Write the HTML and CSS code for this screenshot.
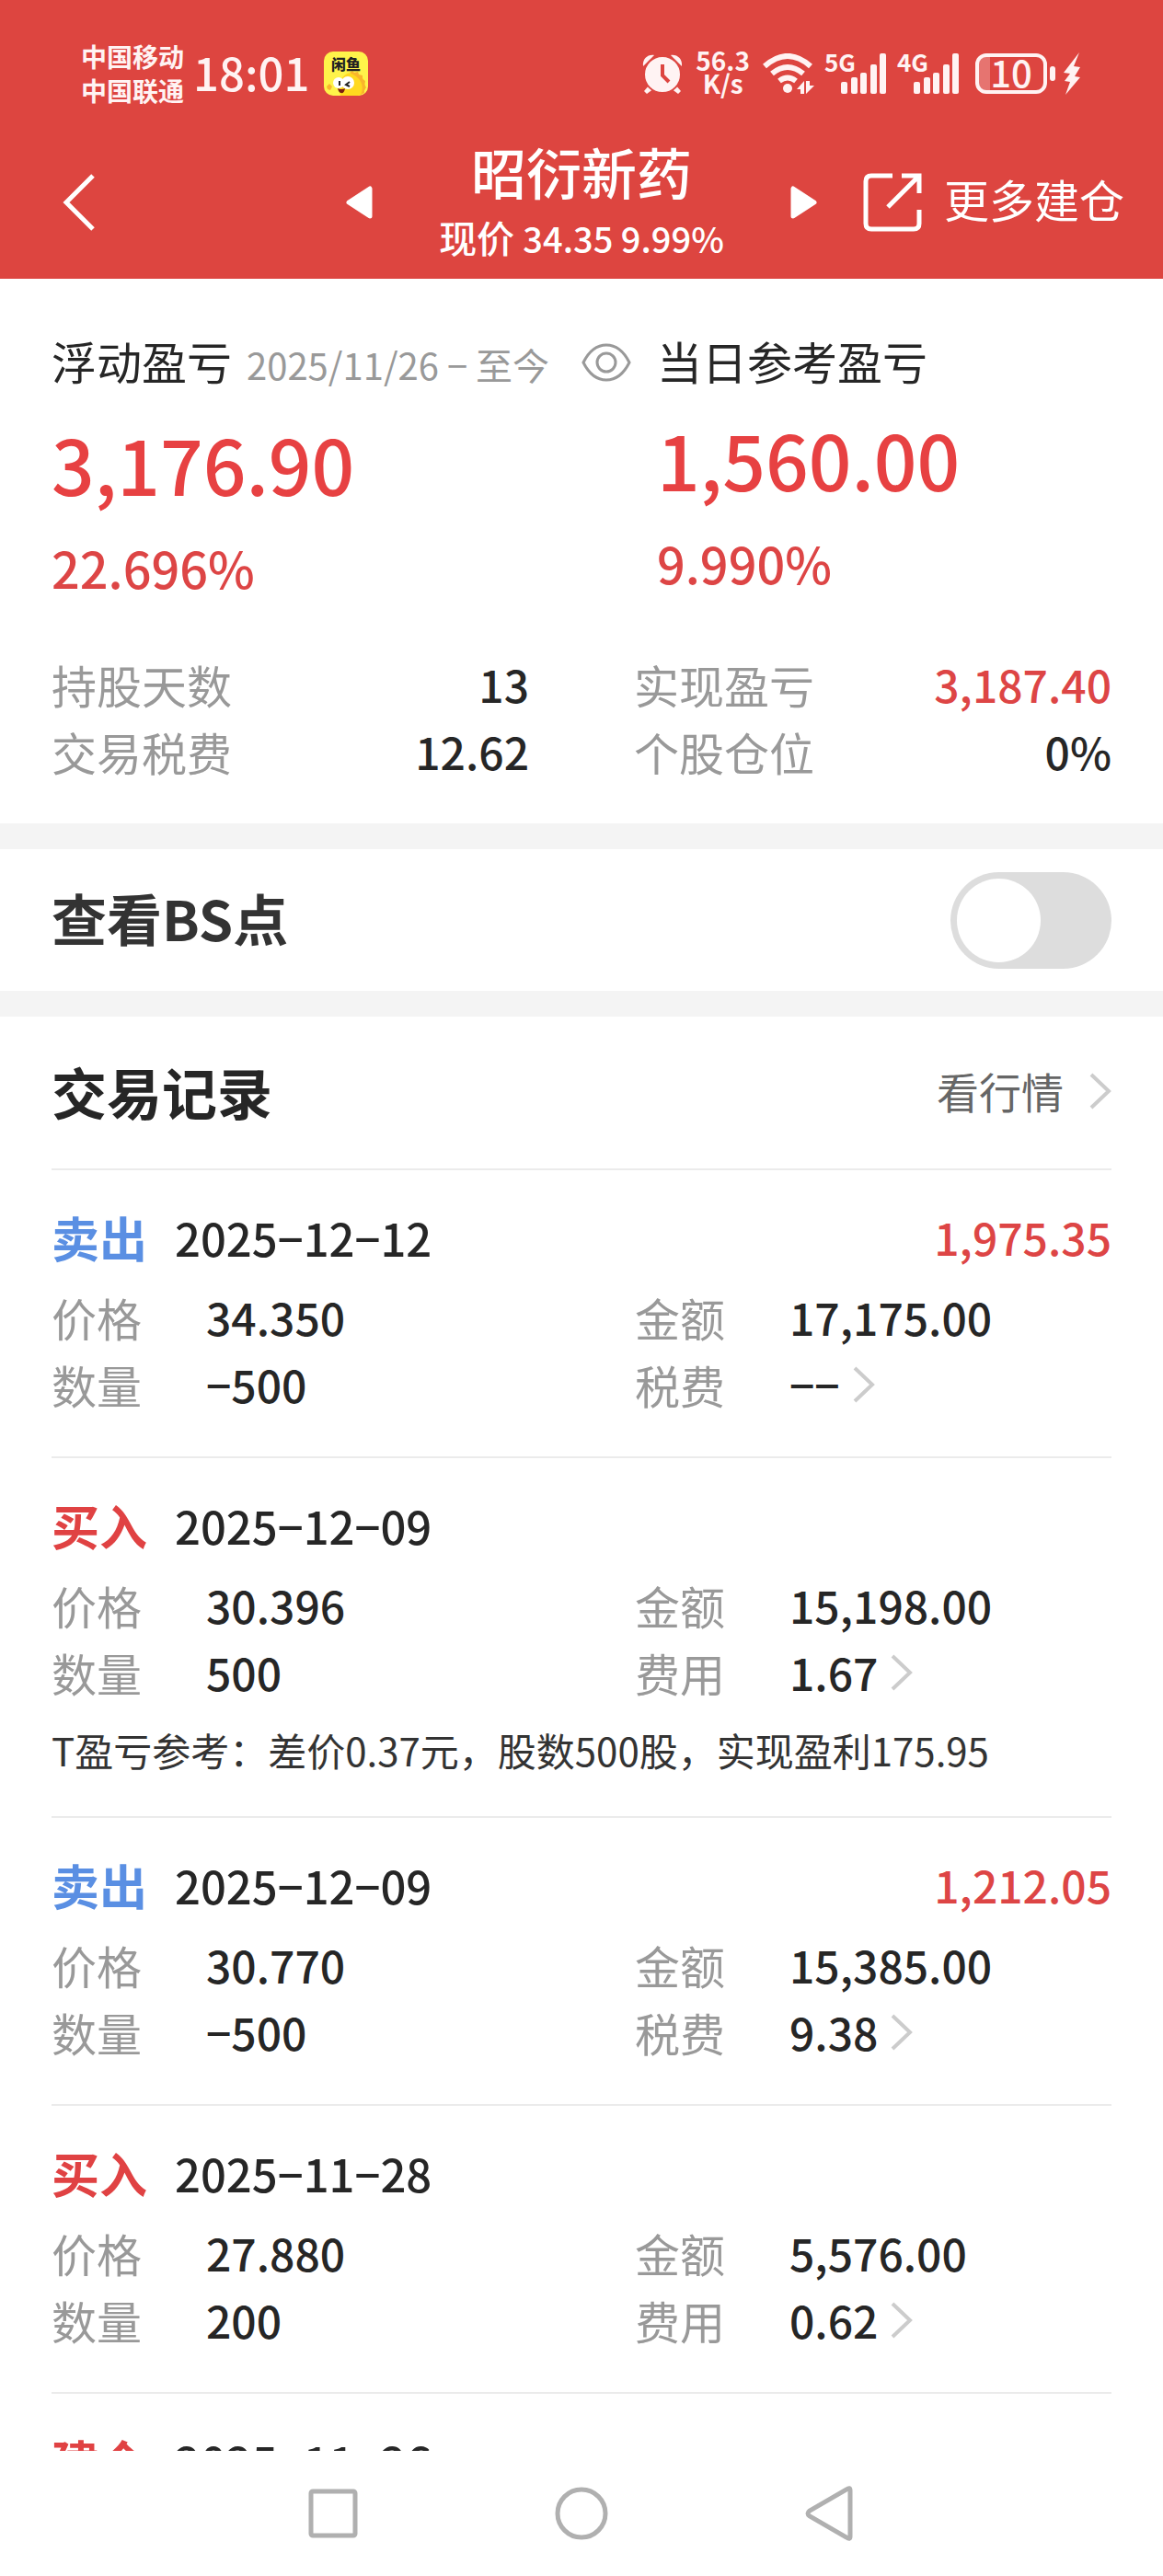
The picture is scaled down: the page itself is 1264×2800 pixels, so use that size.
FILE: index.html
```
<!DOCTYPE html>
<html lang="zh-CN">
<head>
    <meta charset="UTF-8">
    <meta name="viewport" content="width=device-width, initial-scale=1.0">
    <title>昭衍新药</title>
    <link rel="stylesheet" href="styles.css">
</head>
<body>
    <header class="header">
        <!-- Phone status bar -->
        <div class="status-bar">
            <div class="carriers">中国移动<br>中国联通</div>
            <div class="clock">18:01</div>
            <svg class="app-icon" viewBox="0 0 48 48">
                <rect width="48" height="48" rx="10" fill="#fff34a"/>
                <path d="M18 48C14 34 20 23 31 23c9 0 15 8 14 17-1 4-4 7-8 8z" fill="#ffd91f"/>
                <path d="M28 23l3-2 2 2 4-1 1 3 4 1 0 4 3 2-1 4 2 3-2 3 0 3-4 2c4-8 2-18-12-24z" fill="#f9b52c"/>
                <path d="M3 38l3-3 3 3-2 4-3-1z" fill="#f9b52c"/>
                <circle cx="16" cy="34" r="6" fill="#fff"/>
                <circle cx="26" cy="34" r="7" fill="#fff"/>
                <path d="M17 32v5M28 33l-4 3 4 2" fill="none" stroke="#222" stroke-width="2"/>
                <path d="M15 40q4 2 8 0-1 6-4 5-3 0-4-5z" fill="#7a1f10"/>
                <text x="24" y="20" text-anchor="middle" class="app-icon-text">闲鱼</text>
            </svg>
            <div class="status-icons">
                <svg class="icon-alarm" viewBox="0 0 44 44" fill="currentColor">
                    <path d="M1 14C0 6 6 1 13 2zM43 14C44 6 38 1 31 2z"/>
                    <path d="M8 34l-6 7 3 3 8-6zM36 34l6 7-3 3-8-6z"/>
                    <circle cx="22" cy="23" r="20" stroke="#dd4540" stroke-width="2"/>
                    <path d="M22 12v12l7 7" fill="none" stroke="#dd4540" stroke-width="4"/>
                </svg>
                <div class="speed">56.3<br>K/s</div>
                <svg class="icon-wifi" viewBox="0 0 56 44">
                    <g fill="none" stroke="currentColor" stroke-width="6">
                        <path d="M2 14q25-22 50 0"/>
                        <path d="M10 22q17-14 34 0"/>
                        <path d="M18 30q9-7 18 0"/>
                    </g>
                    <circle cx="27" cy="38" r="5" fill="currentColor"/>
                    <path d="M45 44V30l-8 9h4v5zM47 30v14l9-9h-5v-5z" fill="currentColor"/>
                </svg>
                <div class="signal">
                    <span class="signal-type">5G</span>
                    <svg viewBox="0 0 66 44" fill="currentColor">
                        <rect x="16" y="31" width="7" height="13" rx="2"/>
                        <rect x="27" y="26" width="7" height="18" rx="2"/>
                        <rect x="37" y="21" width="7" height="23" rx="2"/>
                        <rect x="48" y="12" width="7" height="32" rx="2"/>
                        <rect x="58" y="0" width="7" height="44" rx="2"/>
                    </svg>
                </div>
                <div class="signal">
                    <span class="signal-type">4G</span>
                    <svg viewBox="0 0 66 44" fill="currentColor">
                        <rect x="16" y="31" width="7" height="13" rx="2"/>
                        <rect x="27" y="26" width="7" height="18" rx="2"/>
                        <rect x="37" y="21" width="7" height="23" rx="2"/>
                        <rect x="48" y="12" width="7" height="32" rx="2"/>
                        <rect x="58" y="0" width="7" height="44" rx="2"/>
                    </svg>
                </div>
                <div class="battery">10</div>
                <svg class="icon-bolt" viewBox="0 0 18 46" fill="currentColor">
                    <path d="M17 0L0 22l7 1-6 8 6 1-5 14L18 27l-6-1 6-10-7-1z"/>
                </svg>
            </div>
        </div>

        <!-- Title bar -->
        <nav class="title-bar">
            <button class="icon-button back" aria-label="返回">
                <svg width="36" height="62" viewBox="0 0 36 62"><path d="M33 2L4 31l29 29" fill="none" stroke="currentColor" stroke-width="5"/></svg>
            </button>
            <div class="stock">
                <button class="icon-button" aria-label="上一只">
                    <svg width="30" height="36" viewBox="0 0 30 36"><path d="M3 18L26 3v30z" fill="currentColor" stroke="currentColor" stroke-width="5" stroke-linejoin="round"/></svg>
                </button>
                <div class="stock-title">
                    <h1>昭衍新药</h1>
                    <p>现价 <span>34.35 9.99%</span></p>
                </div>
                <button class="icon-button" aria-label="下一只">
                    <svg width="30" height="36" viewBox="0 0 30 36"><path d="M27 18L4 3v30z" fill="currentColor" stroke="currentColor" stroke-width="5" stroke-linejoin="round"/></svg>
                </button>
            </div>
            <a class="more" href="#">
                <svg width="64" height="64" viewBox="0 0 64 64" fill="none" stroke="currentColor" stroke-width="5">
                    <path d="M32 3H9q-6 0-6 6v46q0 6 6 6h46q6 0 6-6V40"/>
                    <path d="M42 3h19v19M60 4L27 37"/>
                </svg>
                <span>更多建仓</span>
            </a>
        </nav>
    </header>

    <main class="content">
        <section class="summary">
            <div class="profit">
                <div class="profit-item">
                    <div class="profit-label">浮动盈亏 <small>2025/11/26 − 至今</small>
                        <button class="icon-button eye" aria-label="隐藏金额">
                            <svg width="54" height="42" viewBox="0 0 54 42" fill="none" stroke="currentColor" stroke-width="3">
                                <path d="M2 21C8 9 16 2 27 2s19 7 25 19c-6 12-14 19-25 19S8 33 2 21z"/>
                                <circle cx="27" cy="21" r="10"/>
                            </svg>
                        </button>
                    </div>
                    <div class="profit-value">3,176.90</div>
                    <div class="profit-rate">22.696%</div>
                </div>
                <div class="profit-item">
                    <div class="profit-label">当日参考盈亏</div>
                    <div class="profit-value">1,560.00</div>
                    <div class="profit-rate">9.990%</div>
                </div>
            </div>
            <dl class="stats">
                <div><dt>持股天数</dt><dd>13</dd></div>
                <div><dt>实现盈亏</dt><dd class="red">3,187.40</dd></div>
                <div><dt>交易税费</dt><dd>12.62</dd></div>
                <div><dt>个股仓位</dt><dd>0%</dd></div>
            </dl>
        </section>

        <section class="bs-row">
            <label for="bsSwitch">查看BS点</label>
            <input type="checkbox" id="bsSwitch" class="switch">
        </section>

        <section class="records">
            <div class="records-head">
                <h2>交易记录</h2>
                <a href="#">看行情 <svg class="arrow" viewBox="0 0 24 40"><path d="M2 2l19 18L2 38"/></svg></a>
            </div>

            <article class="record">
                <div class="record-head"><b class="sell">卖出</b><time>2025−12−12</time><span class="red">1,975.35</span></div>
                <dl class="record-data">
                    <dt>价格</dt><dd>34.350</dd>
                    <dt>金额</dt><dd>17,175.00</dd>
                    <dt>数量</dt><dd>−500</dd>
                    <dt>税费</dt><dd>−− <svg class="arrow" viewBox="0 0 24 40"><path d="M2 2l19 18L2 38"/></svg></dd>
                </dl>
            </article>

            <article class="record">
                <div class="record-head"><b class="buy">买入</b><time>2025−12−09</time></div>
                <dl class="record-data">
                    <dt>价格</dt><dd>30.396</dd>
                    <dt>金额</dt><dd>15,198.00</dd>
                    <dt>数量</dt><dd>500</dd>
                    <dt>费用</dt><dd>1.67 <svg class="arrow" viewBox="0 0 24 40"><path d="M2 2l19 18L2 38"/></svg></dd>
                </dl>
                <p class="record-note">T盈亏参考：差价0.37元，股数500股，实现盈利175.95</p>
            </article>

            <article class="record">
                <div class="record-head"><b class="sell">卖出</b><time>2025−12−09</time><span class="red">1,212.05</span></div>
                <dl class="record-data">
                    <dt>价格</dt><dd>30.770</dd>
                    <dt>金额</dt><dd>15,385.00</dd>
                    <dt>数量</dt><dd>−500</dd>
                    <dt>税费</dt><dd>9.38 <svg class="arrow" viewBox="0 0 24 40"><path d="M2 2l19 18L2 38"/></svg></dd>
                </dl>
            </article>

            <article class="record">
                <div class="record-head"><b class="buy">买入</b><time>2025−11−28</time></div>
                <dl class="record-data">
                    <dt>价格</dt><dd>27.880</dd>
                    <dt>金额</dt><dd>5,576.00</dd>
                    <dt>数量</dt><dd>200</dd>
                    <dt>费用</dt><dd>0.62 <svg class="arrow" viewBox="0 0 24 40"><path d="M2 2l19 18L2 38"/></svg></dd>
                </dl>
            </article>

            <article class="record">
                <div class="record-head"><b class="buy">建仓</b><time>2025−11−26</time></div>
            </article>
        </section>
    </main>

    <!-- System navigation -->
    <footer class="system-nav">
        <button class="icon-button" aria-label="最近任务">
            <svg width="60" height="60" viewBox="0 0 60 60"><rect x="6" y="6" width="48" height="48" rx="2"/></svg>
        </button>
        <button class="icon-button" aria-label="主页">
            <svg width="60" height="60" viewBox="0 0 60 60"><circle cx="30" cy="30" r="26"/></svg>
        </button>
        <button class="icon-button" aria-label="返回">
            <svg width="60" height="60" viewBox="0 0 60 60"><path d="M52 5v50q0 4-4 1L8 33q-4-3 0-6L48 4q4-3 4 1z"/></svg>
        </button>
    </footer>
</body>
</html>
```
FILE: styles.css
```
* {
    box-sizing: border-box;
}

body {
    margin: 0;
    height: 100vh;
    display: flex;
    flex-direction: column;
    background-color: #fff;
    color: #262626;
    font-family: "Noto Sans CJK SC", "Noto Sans", sans-serif;
    font-size: 49px;
    line-height: 73px;
}

h1, h2, p, dl, dd {
    margin: 0;
}

a {
    color: inherit;
    text-decoration: none;
}

.icon-button {
    display: flex;
    padding: 0;
    border: 0;
    background: none;
    color: inherit;
    cursor: pointer;
}

.red {
    color: #dd4545;
}

/* Header */
.header {
    flex: none;
    background-color: #dd4540;
    color: #fff;
}

.status-bar {
    display: flex;
    align-items: center;
    height: 136px;
    padding: 24px 90px 0 88px;
    color: #fff3f3;
}

.carriers {
    font-size: 28px;
    line-height: 37px;
    font-weight: 700;
}

.clock {
    margin-left: 10px;
    padding-bottom: 6px;
    font-size: 49px;
    font-weight: 500;
}

.app-icon {
    width: 48px;
    height: 48px;
    margin-left: 16px;
}

.app-icon-text {
    font-size: 16px;
    font-weight: 900;
    fill: #222;
}

.status-icons {
    display: flex;
    align-items: center;
    margin-left: auto;
}

.icon-alarm {
    width: 44px;
    height: 44px;
}

.speed {
    margin: 0 14px;
    padding-bottom: 5px;
    font-size: 28px;
    line-height: 25px;
    font-weight: 700;
    text-align: center;
}

.icon-wifi {
    width: 56px;
    height: 44px;
}

.signal {
    position: relative;
    width: 66px;
    height: 44px;
    margin-left: 13px;
}

.signal svg {
    display: block;
}

.signal-type {
    position: absolute;
    left: -2px;
    top: 0;
    font-size: 26px;
    line-height: 18px;
    font-weight: 700;
}

.battery {
    position: relative;
    width: 78px;
    height: 44px;
    margin: 0 18px 0 17px;
    border: 4px solid currentColor;
    border-radius: 12px;
    background: linear-gradient(to right, #e67470 12px, transparent 12px);
    font-size: 40px;
    line-height: 32px;
    font-weight: 500;
    text-align: center;
}

/* Battery tip */
.battery::after {
    content: "";
    position: absolute;
    right: -13px;
    top: 10px;
    width: 6px;
    height: 16px;
    border-radius: 3px;
    background-color: currentColor;
}

.icon-bolt {
    width: 18px;
    height: 46px;
}

.title-bar {
    display: grid;
    grid-template-columns: 1fr 512px 1fr;
    align-items: center;
    height: 167px;
    padding: 0 42px;
}

.back {
    margin-left: 26px;
}

.stock {
    display: flex;
    align-items: center;
    justify-content: space-between;
}

.stock-title {
    padding-bottom: 6px;
    text-align: center;
}

.stock-title h1 {
    font-size: 60px;
    line-height: 82px;
    font-weight: 500;
}

.stock-title p {
    font-size: 41px;
    line-height: 60px;
    font-weight: 500;
}

.stock-title span {
    font-size: 38px;
}

.more {
    display: flex;
    align-items: center;
    justify-content: flex-end;
    gap: 24px;
    white-space: nowrap;
}

.more span {
    padding-bottom: 8px;
}

/* Page content, scrolls under the header */
.content {
    flex: 1;
    min-height: 0;
    overflow-y: auto;
    scrollbar-width: none;
}

.summary {
    padding: 52px 56px 42px;
}

.profit {
    display: grid;
    grid-template-columns: 658px 1fr;
}

.profit-label {
    display: flex;
    align-items: baseline;
    white-space: nowrap;
}

.profit-label small {
    margin-left: 16px;
    font-size: 40px;
    color: #999;
}

.eye {
    align-self: center;
    margin-left: auto;
    margin-right: 28px;
    color: #999;
}

.profit-value {
    font-size: 82px;
    line-height: 142px;
    font-weight: 500;
    color: #e74142;
}

.profit-rate {
    font-size: 54px;
    line-height: 84px;
    font-weight: 500;
    color: #dd4545;
}

.stats {
    display: grid;
    grid-template-columns: 1fr 1fr;
    column-gap: 114px;
    margin-top: 48px;
}

.stats div {
    display: flex;
    justify-content: space-between;
}

dt {
    color: #999;
}

dd {
    font-size: 48px;
    font-weight: 500;
}

.bs-row {
    display: flex;
    align-items: center;
    justify-content: space-between;
    height: 210px;
    padding: 0 56px;
    border: solid #f4f4f4;
    border-width: 28px 0;
    font-size: 60px;
    font-weight: 700;
    color: #333;
}

.bs-row label {
    padding-bottom: 8px;
}

.switch {
    appearance: none;
    width: 175px;
    height: 105px;
    margin: 0;
    padding: 7px;
    border-radius: 53px;
    background-color: #ddd;
    cursor: pointer;
}

.switch::before {
    content: "";
    display: block;
    width: 91px;
    height: 91px;
    border-radius: 50%;
    background-color: #fff;
}

.switch:checked {
    background-color: #dd4540;
}

.switch:checked::before {
    margin-left: auto;
}

/* Trade records */
.records {
    padding: 0 56px;
}

.records-head {
    display: flex;
    align-items: center;
    justify-content: space-between;
    height: 165px;
    padding-bottom: 4px;
}

.records-head h2 {
    font-size: 60px;
    font-weight: 700;
}

.records-head a {
    display: flex;
    align-items: center;
    gap: 28px;
    font-size: 46px;
    color: #666;
}

.arrow {
    width: 24px;
    height: 40px;
    fill: none;
    stroke: #ccc;
    stroke-width: 4;
}

.record {
    padding: 33px 0 42px;
    border-top: 2px solid #ebebeb;
}

.record-head {
    display: flex;
    align-items: center;
    height: 78px;
    margin-bottom: 12px;
    font-weight: 500;
}

.record-head b {
    width: 134px;
    font-size: 52px;
}

.record-head span {
    margin-left: auto;
    font-size: 48px;
}

.sell {
    color: #5a8fe3;
}

.buy {
    color: #e04243;
}

.record-data {
    display: grid;
    grid-template-columns: 168px 1fr 168px 350px;
}

.record-data dd {
    display: flex;
    align-items: center;
    gap: 14px;
}

.record-note {
    margin-top: 17px;
    font-size: 42px;
    line-height: 61px;
    color: #333;
}

/* System navigation */
.system-nav {
    flex: none;
    display: flex;
    align-items: center;
    justify-content: center;
    gap: 210px;
    height: 136px;
    background-color: #fff;
}

.system-nav svg {
    fill: none;
    stroke: #b0b0b0;
    stroke-width: 5;
}
```
